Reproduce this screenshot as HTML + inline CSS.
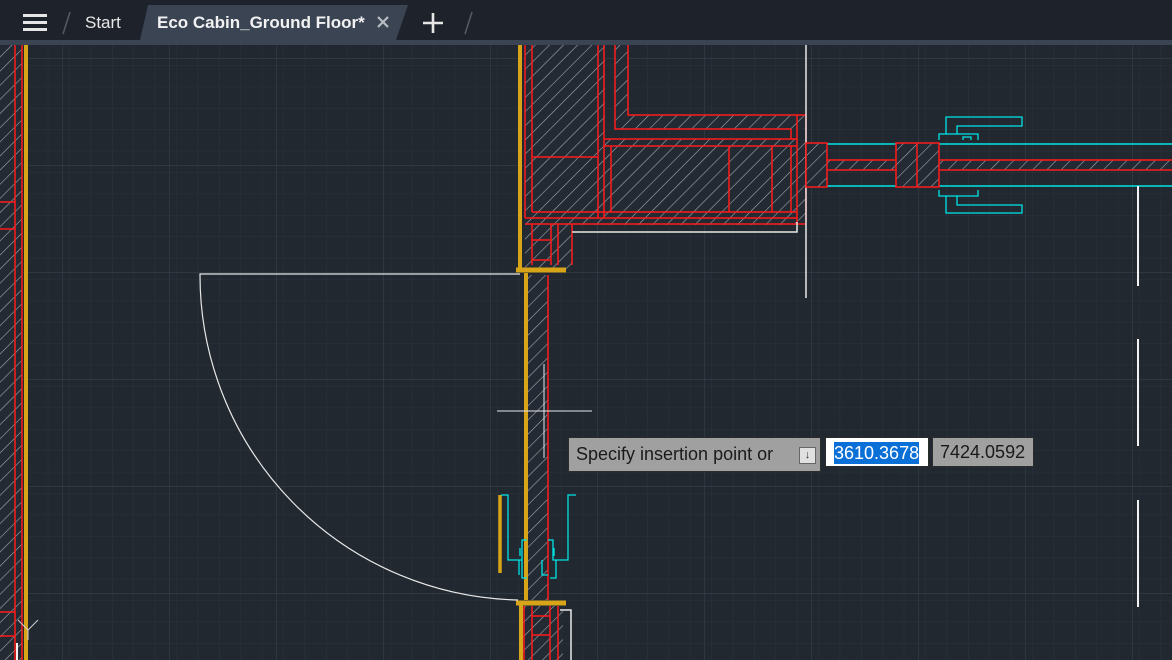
<!DOCTYPE html>
<html><head><meta charset="utf-8"><style>
html,body{margin:0;padding:0;width:1172px;height:660px;overflow:hidden;background:#212830;font-family:"Liberation Sans",sans-serif}
.bar{position:absolute;left:0;top:0;width:1172px;height:40px;background:#1e222a}
.strip{position:absolute;left:0;top:40px;width:1172px;height:5px;background:#3b4453}
.tab{position:absolute;left:140px;top:5px;width:268px;height:35px;background:#3b4453;clip-path:polygon(8px 0,100% 0,calc(100% - 12px) 100%,0 100%)}
.t{position:absolute;color:#e8e8e8;font-size:18px}
svg{position:absolute;left:0;top:0}
.box{position:absolute;font-size:18px;height:32px;line-height:32px;box-sizing:border-box}
</style></head><body>
<div class="bar"></div>
<div class="tab"></div>
<div class="strip"></div>
<svg width="1172" height="45">
<rect x="23" y="14" width="24" height="3" fill="#e6e6e6"/><rect x="23" y="21" width="24" height="3" fill="#e6e6e6"/><rect x="23" y="28" width="24" height="3" fill="#e6e6e6"/>
<line x1="70" y1="12" x2="63" y2="34" stroke="#555c68" stroke-width="1.5"/>
<line x1="472" y1="12" x2="465" y2="34" stroke="#555c68" stroke-width="1.5"/>
<path d="M378 17 L388 27 M388 17 L378 27" stroke="#b8bcc4" stroke-width="2.2"/>
<path d="M433 13 V33 M423 23 H443" stroke="#e6e6e6" stroke-width="2.6"/>
</svg>
<div class="t" style="left:85px;top:13px;font-size:17px">Start</div>
<div class="t" style="left:157px;top:13px;font-weight:bold;font-size:17px;color:#f2f2f2">Eco Cabin_Ground Floor*</div>

<svg width="1172" height="615" style="top:45px" viewBox="0 45 1172 615">
<defs>
<pattern id="gm" width="21.4" height="21.4" patternUnits="userSpaceOnUse" x="5" y="1"><path d="M0 0H21.4M0 0V21.4" stroke="#2b323c" stroke-width="1"/></pattern>
<pattern id="gM" width="107" height="107" patternUnits="userSpaceOnUse" x="62" y="58"><path d="M0 0H107M0 0V107" stroke="#37404c" stroke-width="1.2"/></pattern>
<pattern id="h" width="10" height="10" patternUnits="userSpaceOnUse" patternTransform="rotate(45)"><rect width="10" height="10" fill="#232a33"/><line x1="0" y1="0" x2="0" y2="10" stroke="#a4a8ae" stroke-width="1.2"/></pattern>
</defs>
<rect x="0" y="45" width="1172" height="615" fill="url(#gm)"/>
<rect x="0" y="45" width="1172" height="615" fill="url(#gM)"/>
<g fill="none" stroke-width="1.5">
<rect x="0" y="45" width="22" height="615" fill="url(#h)" stroke="none"/>
<path d="M15 45V660M22 45V660M0 202H15M0 229H15M0 612H15M0 636H15" stroke="#ff1a1a"/>
<line x1="26" y1="45" x2="26" y2="660" stroke="#d8a418" stroke-width="4"/>
<rect x="525" y="45" width="80" height="180" fill="url(#h)" stroke="none"/>
<rect x="615" y="45" width="13" height="84" fill="url(#h)" stroke="none"/>
<rect x="628" y="115" width="178" height="14" fill="url(#h)" stroke="none"/>
<rect x="604" y="139" width="202" height="86" fill="url(#h)" stroke="none"/>
<rect x="525" y="218" width="47" height="52" fill="url(#h)" stroke="none"/>
<g stroke="#ff1a1a">
<path d="M525 45V218M532 45V212M598 45V218M604 45V218M615 45V129H791M628 45V115H806V222M791 129V139M604 139H797M604 146H797M611 146V212M729 146V212M772 146V212M791 146V212M797 115V224M532 157H598M532 212H797M525 218H797M525 224H806M532 224V265M551 224V265M558 224V265M572 224V265M532 240H550M532 260H550"/>
</g>
<path d="M572 232H797V222M806 45V298" stroke="#e8e8e8" stroke-width="1.5"/>
<line x1="520" y1="45" x2="520" y2="270" stroke="#d8a418" stroke-width="4"/>
<path d="M516 270H566" stroke="#d8a418" stroke-width="5"/>
<rect x="527" y="275" width="21" height="325" fill="url(#h)" stroke="none"/>
<line x1="548" y1="275" x2="548" y2="600" stroke="#ff1a1a"/>
<line x1="526" y1="273" x2="526" y2="600" stroke="#d8a418" stroke-width="4"/>
<path d="M516 603H566" stroke="#d8a418" stroke-width="5"/>
<rect x="520" y="606" width="43" height="54" fill="url(#h)" stroke="none"/>
<path d="M524 606V660M532 606V660M550 606V660M558 606V660M532 616H550M532 635H550" stroke="#ff1a1a"/>
<path d="M560 610H571V660" stroke="#e8e8e8"/>
<line x1="521" y1="605" x2="521" y2="660" stroke="#d8a418" stroke-width="4"/>
<path d="M520 274H200 A325 325 0 0 0 518 600" stroke="#e8e8e8" stroke-width="1.2"/>
<line x1="500" y1="495" x2="500" y2="573" stroke="#d8a418" stroke-width="3.5"/>
<path d="M501 495H508V560H522V540H527M519 560V575M542 560V575H548M522 542V578H527" stroke="#00e5e5" stroke-width="1.3"/>
<path d="M576 495H568V560H553V540H548M556 560V578H550" stroke="#00e5e5" stroke-width="1.3"/>
<path d="M520 548V556M554 548V556" stroke="#00e5e5" stroke-width="1.3"/>
<path d="M497 411H592M544 364V458" stroke="#e8e8e8" stroke-width="1"/>
<rect x="806" y="143" width="21" height="44" fill="url(#h)" stroke="none"/>
<rect x="896" y="143" width="43" height="44" fill="url(#h)" stroke="none"/>
<rect x="827" y="160" width="345" height="10" fill="url(#h)" stroke="none"/>
<path d="M827 144H896M939 144H1172M827 186H896M939 186H1172" stroke="#00e5e5"/>
<path d="M827 160H896M939 160H1172M827 170H896M939 170H1172" stroke="#ff1a1a"/>
<rect x="806" y="143" width="21" height="44" stroke="#ff1a1a"/>
<rect x="896" y="143" width="43" height="44" stroke="#ff1a1a"/>
<path d="M917 143V187" stroke="#ff1a1a"/>
<path d="M939 140V134H978V140M946 134V117H1022V126H957V134M963 140V137H971V140M939 190V196H978V190M946 196V213H1022V205H957V196" stroke="#00e5e5" stroke-width="1.3"/>
<path d="M1138 186V286M1138 339V446M1138 500V607" stroke="#f2f2f2" stroke-width="2"/>
<path d="M18 620L28 630L38 620M28 630V640" stroke="#cfcfcf" stroke-width="1"/>
<path d="M17 643V660" stroke="#f2f2f2" stroke-width="2"/>
</g>
</svg>

<div class="box" style="left:568px;top:437px;width:253px;height:35px;background:#a0a0a0;border:1px solid #2c2c2c;color:#1a1a1a;padding-left:7px;line-height:33px">Specify insertion point or</div>
<div style="position:absolute;left:799px;top:447px;width:15px;height:15px;background:#e0e0e0;border:1px solid #666;font-size:11px;line-height:15px;text-align:center;color:#333">↓</div>
<div class="box" style="left:825px;top:437px;width:104px;height:30px;background:#fff;border:1px solid #2c2c2c;padding:4px 0 0 8px;line-height:22px"><span style="background:#0a6fd6;color:#fff;display:inline-block;height:22px;line-height:22px">3610.3678</span></div>
<div class="box" style="left:932px;top:437px;width:102px;height:30px;background:#a0a0a0;border:1px solid #2c2c2c;color:#1a1a1a;padding-left:7px;line-height:28px">7424.0592</div>
</body></html>
